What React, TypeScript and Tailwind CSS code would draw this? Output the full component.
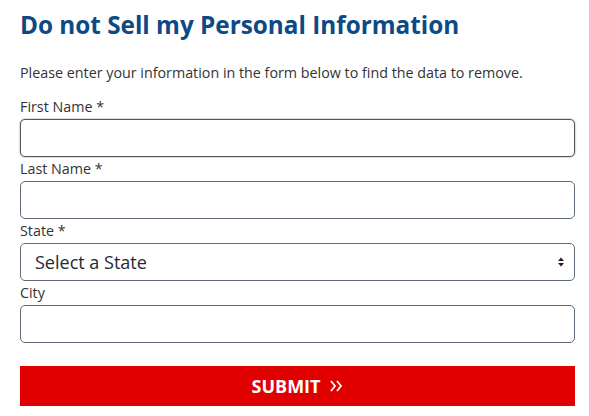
import React from 'react';

const labelCls = 'block h-6 text-[14.3px] leading-6 text-[#333]';
const inputCls =
  'block h-[38px] w-full rounded-[5px] border border-[#5f6b76] bg-white px-3 text-[16px] outline-none';

export default function App() {
  return (
    <div className="min-h-screen bg-white pl-5 pr-[14px] pt-[8px] font-['Open_Sans',sans-serif]">
      <h1 className="text-[24.3px] font-bold leading-[34px] text-[#0d4a83]">
        Do not Sell my Personal Information
      </h1>
      <p className="mt-[19px] text-[14.3px] leading-6 text-[#333]">
        Please enter your information in the form below to find the data to remove.
      </p>

      <form className="mt-[10px]" onSubmit={(e) => e.preventDefault()}>
        <label className={labelCls}>First Name *</label>
        <input
          className="block h-[38px] w-full rounded-[5px] border border-[#555] bg-white px-3 text-[16px] shadow-[0_0_2px_rgba(0,0,0,0.45)] outline-none"
          type="text"
        />

        <label className={labelCls}>Last Name *</label>
        <input className={inputCls} type="text" />

        <label className={labelCls}>State *</label>
        <div className="relative">
          <select className="block h-[38px] w-full appearance-none rounded-[5px] border border-[#5f6b76] bg-white pl-[14px] text-[18px] text-[#1f2a36] outline-none">
            <option>Select a State</option>
          </select>
          <svg
            className="pointer-events-none absolute right-[11px] top-1/2 -translate-y-1/2"
            width="6"
            height="10"
            viewBox="0 0 6 10"
          >
            <path d="M0 4 L3 0.5 L6 4 Z" fill="#222" />
            <path d="M0 6 L3 9.5 L6 6 Z" fill="#222" />
          </svg>
        </div>

        <label className={labelCls}>City</label>
        <input className={inputCls} type="text" />

        <button
          type="submit"
          className="mt-[23px] flex h-10 w-full items-center justify-center gap-[10px] bg-[#e10000] text-[18px] font-bold text-white"
        >
          <span>SUBMIT</span>
          <svg width="13" height="12" viewBox="0 0 13 12" fill="none" stroke="#fff" strokeWidth="1.8">
            <path d="M1 1 L5 6 L1 11" />
            <path d="M7 1 L11 6 L7 11" />
          </svg>
        </button>
      </form>
    </div>
  );
}
